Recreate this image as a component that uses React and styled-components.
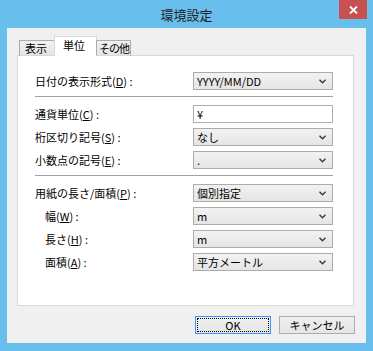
import React from 'react'
import styled, { createGlobalStyle } from 'styled-components'

const GlobalStyle = createGlobalStyle`
  body {
    margin: 0;
    font-family: "Noto Sans CJK JP", "Noto Sans", sans-serif;
  }
`

const Window = styled.div`
  width: 373px;
  height: 351px;
  box-sizing: border-box;
  padding: 0 7px 8px 7px;
  background: #68bfee;
  display: flex;
  flex-direction: column;
`

const TitleBar = styled.div`
  height: 28px;
  display: grid;
  grid-template-columns: 1fr auto 1fr;
  align-items: start;
`

const Title = styled.div`
  grid-column: 2;
  font-size: 13px;
  line-height: 29px;
  color: #1e1e1e;
`

const CloseButton = styled.div`
  grid-column: 3;
  justify-self: end;
  width: 28px;
  height: 19px;
  margin-right: -1px;
  background: #c75050;
  display: flex;
  align-items: center;
  justify-content: center;
`

const Client = styled.div`
  background: #f0f0f0;
  padding: 9px 12px 9px 10px;
  display: flex;
  flex-direction: column;
`

const TabStrip = styled.div`
  display: flex;
  align-items: flex-end;
  height: 19px;
  padding-left: 2px;
  margin-bottom: -1px;
  position: relative;
  z-index: 1;
`

const Tab = styled.div`
  box-sizing: border-box;
  width: ${p => p.$width}px;
  height: ${p => (p.$active ? 20 : 16)}px;
  border: 1px solid ${p => (p.$active ? '#d9d9d9' : '#acacac')};
  border-bottom: ${p => (p.$active ? 'none' : '1px solid #d9d9d9')};
  background: ${p => (p.$active ? '#fff' : 'linear-gradient(#f0f0f0, #e5e5e5)')};
  margin: ${p => (p.$active ? '0 -1px' : '0')};
  font-size: 11px;
  letter-spacing: ${p => (p.$tight ? -1 : 0)}px;
  line-height: ${p => (p.$active ? 17 : 14)}px;
  padding-left: ${p => p.$pad}px;
  color: #000;
  white-space: nowrap;
  overflow: hidden;
`

const Panel = styled.div`
  box-sizing: border-box;
  height: 251px;
  background: #fff;
  border: 1px solid #d9d9d9;
  padding: 16px 19px 0 17px;
`

const Section = styled.div`
  display: grid;
  grid-template-columns: 158px 140px;
  grid-auto-rows: 18px;
  row-gap: 5px;
`

const Divider = styled.div`
  border-top: 1px solid #a0a0a0;
  margin: 6px 0 8px;
  width: 298px;
`

const Label = styled.div`
  display: flex;
  align-items: center;
  padding-left: ${p => (p.$indent ? 10 : 0)}px;
  font-size: 11px;
  color: #000;
  white-space: nowrap;

  u {
    text-underline-offset: 1px;
  }
`

const Select = styled.div`
  box-sizing: border-box;
  height: 18px;
  border: 1px solid #acacac;
  background: linear-gradient(#f2f2f2, #e5e5e5);
  display: flex;
  align-items: center;
  justify-content: space-between;
  padding: 0 6px 0 3px;
  font-size: 11px;
  color: #000;
  white-space: nowrap;
`

const TextBox = styled.div`
  box-sizing: border-box;
  height: 18px;
  border: 1px solid #abadb3;
  background: #fff;
  display: flex;
  align-items: center;
  padding: 0 3px;
  font-size: 11px;
  color: #000;
`

const ButtonRow = styled.div`
  display: flex;
  justify-content: flex-end;
  gap: 8px;
  margin: 10px -1px 0 0;
`

const Button = styled.div`
  box-sizing: border-box;
  width: 76px;
  height: 18px;
  border: 1px solid ${p => (p.$default ? '#3399ff' : '#acacac')};
  background: linear-gradient(#f0f0f0, #e5e5e5);
  outline: ${p => (p.$default ? '1px dotted #000' : 'none')};
  outline-offset: -3px;
  display: flex;
  align-items: center;
  justify-content: center;
  font-size: 11px;
  color: #000;
`

const Chevron = () => (
  <svg width="7" height="5" viewBox="0 0 7 5">
    <path d="M0.5 0.8 L3.5 3.8 L6.5 0.8" fill="none" stroke="#3a3a3a" strokeWidth="1.4" />
  </svg>
)

const Dropdown = ({ value }) => (
  <Select>
    <span>{value}</span>
    <Chevron />
  </Select>
)

const Key = ({ label, k, indent }) => (
  <Label $indent={indent}>
    {label}(<u>{k}</u>) :
  </Label>
)

export default function App() {
  return (
    <>
      <GlobalStyle />
      <Window>
        <TitleBar>
          <Title>環境設定</Title>
          <CloseButton>
            <svg width="9" height="8" viewBox="0 0 9 8">
              <path d="M1 0.5 L8 7.5 M8 0.5 L1 7.5" stroke="#fff" strokeWidth="1.8" />
            </svg>
          </CloseButton>
        </TitleBar>
        <Client>
          <TabStrip>
            <Tab $width={36} $pad={5}>表示</Tab>
            <Tab $width={43} $pad={8} $active>単位</Tab>
            <Tab $width={35} $pad={2} $tight>その他</Tab>
          </TabStrip>
          <Panel>
            <Section>
              <Key label="日付の表示形式" k="D" />
              <Dropdown value="YYYY/MM/DD" />
            </Section>
            <Divider />
            <Section>
              <Key label="通貨単位" k="C" />
              <TextBox>¥</TextBox>
              <Key label="桁区切り記号" k="S" />
              <Dropdown value="なし" />
              <Key label="小数点の記号" k="E" />
              <Dropdown value="." />
            </Section>
            <Divider />
            <Section>
              <Key label="用紙の長さ/面積" k="P" />
              <Dropdown value="個別指定" />
              <Key label="幅" k="W" indent />
              <Dropdown value="m" />
              <Key label="長さ" k="H" indent />
              <Dropdown value="m" />
              <Key label="面積" k="A" indent />
              <Dropdown value="平方メートル" />
            </Section>
          </Panel>
          <ButtonRow>
            <Button $default>OK</Button>
            <Button>キャンセル</Button>
          </ButtonRow>
        </Client>
      </Window>
    </>
  )
}
